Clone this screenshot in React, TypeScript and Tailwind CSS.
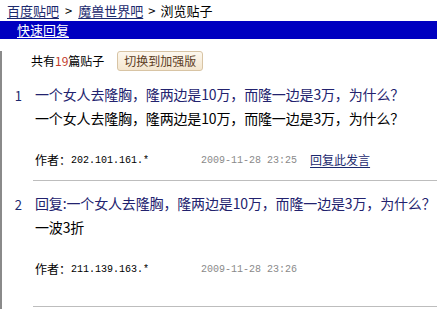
import React from 'react';

interface Post {
  floor: number;
  title: string;
  body: string;
  ip: string;
  time: string;
  canReply: boolean;
}

const posts: Post[] = [
  {
    floor: 1,
    title: '一个女人去隆胸，隆两边是10万，而隆一边是3万，为什么？',
    body: '一个女人去隆胸，隆两边是10万，而隆一边是3万，为什么？',
    ip: '202.101.161.*',
    time: '2009-11-28 23:25',
    canReply: true,
  },
  {
    floor: 2,
    title: '回复:一个女人去隆胸，隆两边是10万，而隆一边是3万，为什么？',
    body: '一波3折',
    ip: '211.139.163.*',
    time: '2009-11-28 23:26',
    canReply: false,
  },
];

const cjk = { fontFamily: '"Noto Sans CJK SC", "Noto Sans", sans-serif' };
const mono = { fontFamily: '"Liberation Mono", "DejaVu Sans Mono", monospace' };

const PostItem: React.FC<{ post: Post; last?: boolean }> = ({ post, last }) => (
  <div className={`flex ${last ? 'pb-[27px]' : 'pb-[10px]'}`}>
    <div className="w-[33px] shrink-0 pt-[1px] text-right pr-[13px] text-[13px] leading-[23px] text-[#1c2a6e]">
      {post.floor}
    </div>
    <div className="flex-1 min-w-0">
      <div className="text-[14px] leading-[23px] tracking-[-0.15px] text-[#22226e] whitespace-nowrap">{post.title}</div>
      <div className="text-[14px] leading-[23px] tracking-[-0.15px] text-black whitespace-nowrap mt-[1px]">{post.body}</div>
      <div className="flex items-center h-[20px] mt-[20px] text-[12px]">
        <span className="text-black">作者：</span>
        <span className="text-black text-[10px]" style={mono}>{post.ip}</span>
        <span className="ml-[52px] text-[#8a8a8a] text-[10px]" style={mono}>{post.time}</span>
        {post.canReply && (
          <a href="#" className="ml-[13px] text-[#1c2a6e] underline underline-offset-2">回复此发言</a>
        )}
      </div>
    </div>
  </div>
);

const App: React.FC = () => {
  return (
    <div className="w-[437px] h-[309px] overflow-hidden bg-white" style={cjk}>
      <div className="h-[21px] flex items-center pl-[7px] text-[13px] text-black whitespace-nowrap">
        <a href="#" className="text-[#1c2a6e] underline underline-offset-2">百度贴吧</a>
        <span className="mx-[6px]">&gt;</span>
        <a href="#" className="text-[#1c2a6e] underline underline-offset-2">魔兽世界吧</a>
        <span className="mx-[5px]">&gt;</span>
        <span>浏览贴子</span>
      </div>
      <div className="h-[18px] bg-[#0000c0] flex items-center pl-[17px]">
        <a href="#" className="text-white text-[13px] underline underline-offset-2">快速回复</a>
      </div>
      <div className="border-l-2 border-[#8a8a8a] h-[270px]">
        <div className="flex items-center h-[20px] mt-[12px] pl-[29px] text-[12px]">
          <span>共有<span className="text-[#c23a2a]">19</span>篇贴子</span>
          <button className="ml-[13px] h-[20px] px-[6px] rounded-[3px] border border-[#d8c4a4] bg-gradient-to-b from-[#fdf8ef] to-[#f4e6cf] text-[#5c3d1e] text-[12px] leading-none">
            切换到加强版
          </button>
        </div>
        <div className="mt-[12px]">
          <PostItem post={posts[0]} />
          <div className="ml-[31px] border-t border-[#bdbdbd]" />
          <div className="pt-[11px]">
            <PostItem post={posts[1]} last />
          </div>
          <div className="ml-[31px] border-t border-[#bdbdbd]" />
        </div>
      </div>
    </div>
  );
};

export default App;
